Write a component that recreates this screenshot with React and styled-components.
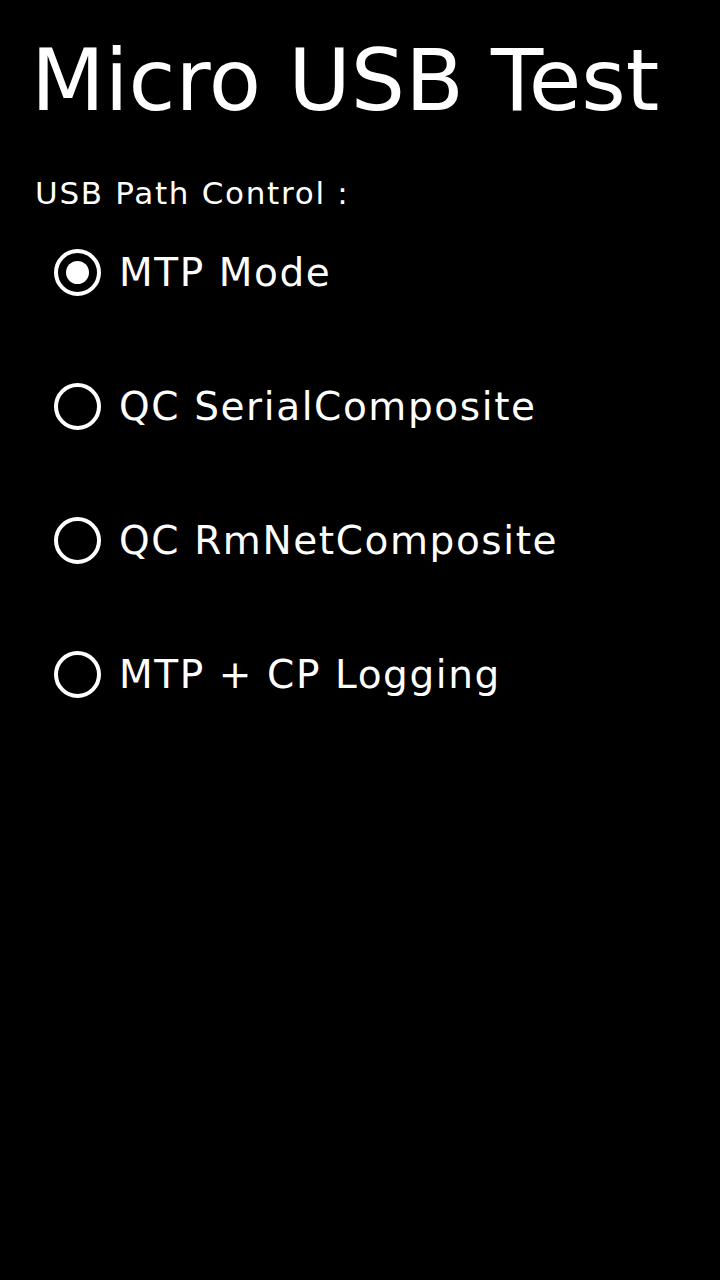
import React, { useState } from "react";
import styled, { createGlobalStyle } from "styled-components";

const GlobalStyle = createGlobalStyle`
  html, body {
    margin: 0;
    padding: 0;
    background: #000;
  }
  body {
    font-family: "DejaVu Sans", Verdana, sans-serif;
    color: #fff;
  }
`;

const Page = styled.div`
  min-height: 1280px;
  background: #000;
  padding: 31px 0 0 25px;
  box-sizing: border-box;
`;

const Title = styled.h1`
  margin: 0 0 0 6px;
  font-size: 85.5px;
  line-height: 100px;
  font-weight: 400;
  color: #fff;
`;

const SectionLabel = styled.div`
  margin: 42px 0 0 10px;
  font-size: 31px;
  line-height: 40px;
  letter-spacing: 1.7px;
  color: #fff;
`;

const RadioList = styled.div`
  display: flex;
  flex-direction: column;
  gap: 14px;
  padding-left: 29px;
  margin-top: -1px;
`;

const RadioRow = styled.label`
  display: flex;
  align-items: center;
  gap: 18px;
  height: 120px;
  cursor: pointer;
`;

const RadioCircle = styled.span`
  box-sizing: border-box;
  width: 47px;
  height: 47px;
  flex: none;
  border: 4.5px solid #fff;
  border-radius: 50%;
  display: flex;
  align-items: center;
  justify-content: center;
`;

const RadioDot = styled.span`
  width: 23px;
  height: 23px;
  border-radius: 50%;
  background: #fff;
`;

const RadioText = styled.span`
  font-size: 39px;
  letter-spacing: 1.6px;
  color: #fff;
`;

const options = [
  "MTP Mode",
  "QC SerialComposite",
  "QC RmNetComposite",
  "MTP + CP Logging",
];

export default function App() {
  const [selected, setSelected] = useState(0);
  return (
    <>
      <GlobalStyle />
      <Page>
        <Title>Micro USB Test</Title>
        <SectionLabel>USB Path Control :</SectionLabel>
        <RadioList>
          {options.map((opt, i) => (
            <RadioRow key={opt} onClick={() => setSelected(i)}>
              <RadioCircle>{selected === i && <RadioDot />}</RadioCircle>
              <RadioText>{opt}</RadioText>
            </RadioRow>
          ))}
        </RadioList>
      </Page>
    </>
  );
}
